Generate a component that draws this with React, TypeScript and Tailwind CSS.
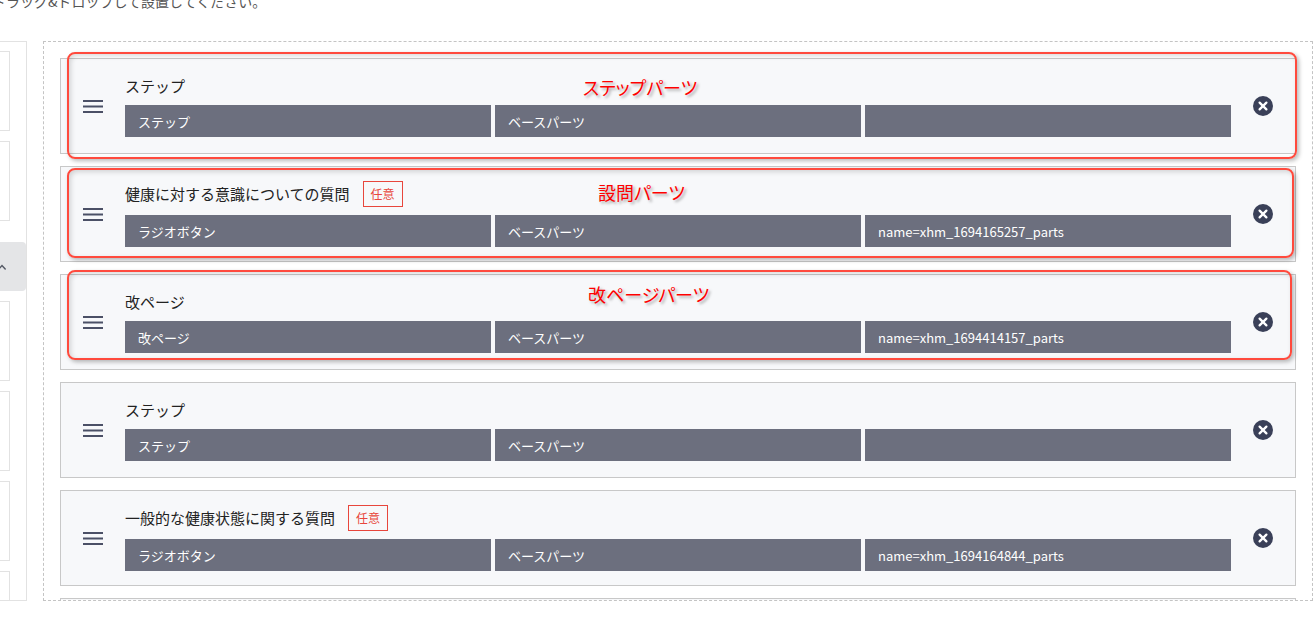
import React from "react";

type CardData = { title: string; badge?: boolean; cells: string[] };

const cards: CardData[] = [
  { title: "ステップ", cells: ["ステップ", "ベースパーツ", ""] },
  { title: "健康に対する意識についての質問", badge: true, cells: ["ラジオボタン", "ベースパーツ", "name=xhm_1694165257_parts"] },
  { title: "改ページ", cells: ["改ページ", "ベースパーツ", "name=xhm_1694414157_parts"] },
  { title: "ステップ", cells: ["ステップ", "ベースパーツ", ""] },
  { title: "一般的な健康状態に関する質問", badge: true, cells: ["ラジオボタン", "ベースパーツ", "name=xhm_1694164844_parts"] },
  { title: "ステップ", cells: ["ステップ", "ベースパーツ", ""] },
];

function Hamburger() {
  return (
    <svg width="20" height="13" viewBox="0 0 20 13" className="shrink-0">
      <rect x="0" y="0" width="20" height="2" fill="#4b5066" />
      <rect x="0" y="5.5" width="20" height="2" fill="#4b5066" />
      <rect x="0" y="11" width="20" height="2" fill="#4b5066" />
    </svg>
  );
}

function CloseIcon() {
  return (
    <svg width="20" height="20" viewBox="0 0 20 20" className="shrink-0">
      <circle cx="10" cy="10" r="10" fill="#3a4058" />
      <path d="M6.6 6.6 L13.4 13.4 M13.4 6.6 L6.6 13.4" stroke="#ffffff" strokeWidth="2.3" strokeLinecap="round" />
    </svg>
  );
}

function Card({ data }: { data: CardData }) {
  return (
    <div className="flex h-[96px] shrink-0 items-center gap-[22px] border border-[#c8c8c8] bg-[#f7f8fa] px-[22px]">
      <Hamburger />
      <div className="flex min-w-0 flex-1 flex-col gap-[8px]">
        <div className="flex items-center gap-[13px]">
          <span className="text-[15px] leading-[22px] text-[#222222]">{data.title}</span>
          {data.badge && (
            <span className="flex h-[26px] w-[40px] items-center justify-center border border-[#e8463c] text-[12px] leading-none text-[#e8463c]">
              任意
            </span>
          )}
        </div>
        <div className="grid grid-cols-3 gap-[4px]">
          {data.cells.map((c, i) => (
            <div key={i} className="flex h-[32px] items-center bg-[#6c6f7e] pl-[13px] text-[13px] leading-none text-white">
              {c}
            </div>
          ))}
        </div>
      </div>
      <CloseIcon />
    </div>
  );
}

function LeftBox() {
  return <div className="h-[80px] shrink-0 border border-[#e2e2e2] bg-white" />;
}

export default function App() {
  return (
    <div className="relative h-[625px] w-[1313px] overflow-hidden bg-white font-['Noto_Sans_CJK_JP','Noto_Sans',sans-serif]">
      <div className="flex h-[41px] items-start">
        <p className="-ml-[8px] -mt-[9px] whitespace-nowrap text-[14px] leading-[20px] text-[#555555]">
          ドラッグ&ドロップして設置してください。
        </p>
      </div>

      <div className="flex items-start">
        {/* Left palette */}
        <div className="-ml-[14px] h-[560px] w-[41px] shrink-0 overflow-hidden border border-[#e2e2e2] bg-white">
          <div className="flex flex-col gap-[10px] pr-[16px] pt-[9px]">
            <LeftBox />
            <LeftBox />
            <button className="-mr-[16px] mt-[11px] flex h-[49px] shrink-0 items-center justify-end rounded-[4px] bg-[#e4e5e7] pr-[20px]">
              <svg width="8" height="6" viewBox="0 0 8 6">
                <polyline points="0.8,5 4,1.6 7.2,5" fill="none" stroke="#555a66" strokeWidth="1.5" strokeLinecap="round" />
              </svg>
            </button>
            <LeftBox />
            <LeftBox />
            <LeftBox />
            <LeftBox />
          </div>
        </div>

        {/* Drop zone */}
        <div className="ml-[16px] h-[560px] w-[1270px] shrink-0 overflow-hidden border border-dashed border-[#c4c4c4] bg-white p-[16px]">
          <div className="flex flex-col gap-[12px]">
            {cards.map((c, i) => (
              <Card key={i} data={c} />
            ))}
          </div>
        </div>
      </div>

      {/* Annotation overlays */}
      <div className="pointer-events-none absolute left-[67px] top-[52px] h-[107px] w-[1230px] rounded-[8px] border-2 border-[#ff4a3d] shadow-[2px_2px_4px_rgba(0,0,0,0.28),inset_2px_2px_5px_rgba(0,0,0,0.15)]" />
      <div className="pointer-events-none absolute left-[67px] top-[168px] h-[90px] w-[1227px] rounded-[8px] border-2 border-[#ff4a3d] shadow-[2px_2px_4px_rgba(0,0,0,0.28),inset_2px_2px_5px_rgba(0,0,0,0.15)]" />
      <div className="pointer-events-none absolute left-[67px] top-[270px] h-[90px] w-[1225px] rounded-[8px] border-2 border-[#ff4a3d] shadow-[2px_2px_4px_rgba(0,0,0,0.28),inset_2px_2px_5px_rgba(0,0,0,0.15)]" />

      <span className="pointer-events-none absolute left-[583px] top-[75px] whitespace-nowrap text-[18px] leading-[24px] text-[#ff0000] [font-feature-settings:'palt'] [text-shadow:2px_2px_3px_rgba(0,0,0,0.35)]">
        ステップパーツ
      </span>
      <span className="pointer-events-none absolute left-[598px] top-[180px] whitespace-nowrap text-[18px] leading-[24px] text-[#ff0000] [font-feature-settings:'palt'] [text-shadow:2px_2px_3px_rgba(0,0,0,0.35)]">
        設問パーツ
      </span>
      <span className="pointer-events-none absolute left-[588px] top-[282px] whitespace-nowrap text-[18px] leading-[24px] text-[#ff0000] [font-feature-settings:'palt'] [text-shadow:2px_2px_3px_rgba(0,0,0,0.35)]">
        改ページパーツ
      </span>
    </div>
  );
}
